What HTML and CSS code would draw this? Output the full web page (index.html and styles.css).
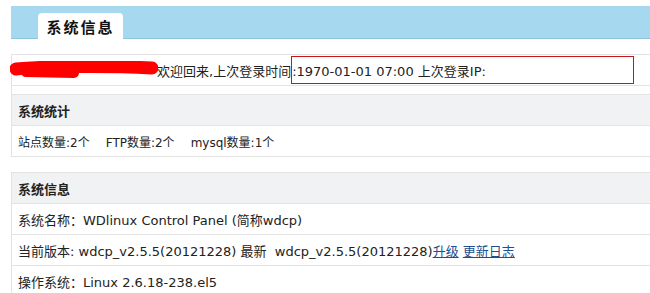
FILE: index.html
```html
<!DOCTYPE html>
<html lang="zh-CN">
<head>
    <meta charset="UTF-8">
    <title>系统信息</title>
    <link rel="stylesheet" href="styles.css">
</head>
<body>
    <div class="topbar">
        <div class="tab">系统信息</div>
    </div>

    <div class="panel welcome-panel">
        <div class="row welcome">
            <svg class="scribble" width="148" height="18" viewBox="0 0 148 18">
                <path d="M6 8 C40 5, 100 5, 142 7" stroke="#f00" stroke-width="13" stroke-linecap="round" fill="none"/>
                <path d="M16 11 L64 12" stroke="#f00" stroke-width="10" stroke-linecap="round" fill="none"/>
            </svg>
            <span>欢迎回来,上次登录时间</span><span class="mark">:1970-01-01 07:00 上次登录IP:</span>
        </div>
        <div class="spacer"></div>
        <div class="row head">系统统计</div>
        <div class="row stats">
            <span class="stat">站点数量:2个</span>
            <span class="stat">FTP数量:2个</span>
            <span class="stat">mysql数量:1个</span>
        </div>
    </div>

    <div class="panel">
        <div class="row head">系统信息</div>
        <div class="row">系统名称：WDlinux Control Panel (简称wdcp)</div>
        <div class="row">当前版本: wdcp_v2.5.5(20121228) 最新&nbsp; wdcp_v2.5.5(20121228)<a href="#">升级</a>&nbsp;<a href="#">更新日志</a></div>
        <div class="row">操作系统：Linux 2.6.18-238.el5</div>
    </div>
</body>
</html>
```

FILE: styles.css
```css
html, body {
    overflow: hidden;
}

body {
    margin: 0;
    background-color: #ffffff;
    color: #222222;
    font-family: "DejaVu Sans", "Noto Sans CJK SC", sans-serif;
    font-size: 13px;
}

/* barre bleue du haut */
.topbar {
    margin: 6px 0 0 11px;
    height: 32px;
    padding-left: 27px;
    background-color: #a6d9ef;
    border-bottom: 1px solid #8fc3de;
    display: flex;
    align-items: flex-end;
}

.tab {
    width: 85px;
    height: 26px;
    margin-bottom: -1px;
    background-color: #ffffff;
    border-radius: 4px 4px 0 0;
    font-family: "Noto Sans CJK SC", sans-serif;
    font-size: 15px;
    font-weight: bold;
    letter-spacing: 2px;
    line-height: 28px;
    text-align: center;
    color: #111111;
}

.panel {
    margin-left: 11px;
    border-left: 1px solid #e3e3e3;
    border-top: 1px solid #e3e3e3;
}

.welcome-panel {
    margin-top: 15px;
    margin-bottom: 15px;
}

.row {
    height: 30px;
    padding-left: 6px;
    border-bottom: 1px solid #e3e3e3;
    display: flex;
    align-items: center;
    white-space: pre;
}

.row.head {
    background-color: #f1f2f4;
    font-family: "Noto Sans CJK SC", sans-serif;
    font-weight: bold;
}

.spacer {
    height: 8px;
    border-bottom: 1px solid #e3e3e3;
}

.welcome {
    padding-left: 0;
}

.scribble {
    flex-shrink: 0;
    margin-left: -2px;
    margin-right: -1px;
    margin-top: -1px;
}

/* cadre rouge */
.mark {
    flex-shrink: 0;
    width: 341px;
    height: 26px;
    border: 1px solid #c8161d;
    display: flex;
    align-items: center;
}

.stats {
    font-size: 12px;
}

.stat {
    margin-right: 16px;
}

a {
    color: #1b4f8f;
    text-decoration: underline;
}
```
